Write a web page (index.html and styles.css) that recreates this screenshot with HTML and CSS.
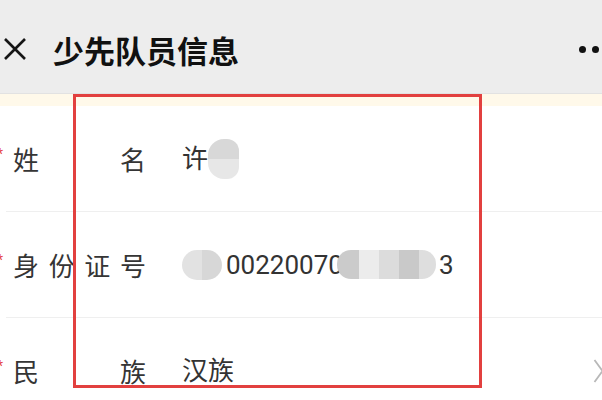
FILE: index.html
```html
<!DOCTYPE html>
<html lang="zh-CN">
<head>
<meta charset="utf-8">
<title>少先队员信息</title>
<link rel="stylesheet" href="styles.css">
</head>
<body>
<div class="page">
  <header class="header">
    <svg class="close" width="26" height="26" viewBox="0 0 26 26">
      <path d="M3 3 L23 23 M23 3 L3 23" stroke="#151515" stroke-width="2.6" fill="none"/>
    </svg>
    <h1 class="title">少先队员信息</h1>
    <div class="more"><span class="dot"></span><span class="dot"></span><span class="dot"></span></div>
  </header>
  <div class="notice"></div>
  <div class="list">
    <div class="row">
      <span class="req">*</span>
      <span class="label"><span>姓</span><span>名</span></span>
      <span class="value">许<span class="blob blob-name"></span></span>
    </div>
    <div class="row">
      <span class="req">*</span>
      <span class="label"><span>身</span><span>份</span><span>证</span><span>号</span></span>
      <span class="value"><span class="blob blob-id1"></span><span class="digits">00220070</span><span class="blob blob-id2"></span><span class="digits tail">3</span></span>
    </div>
    <div class="row">
      <span class="req">*</span>
      <span class="label"><span>民</span><span>族</span></span>
      <span class="value">汉族</span>
      <svg class="chevron" width="11" height="24" viewBox="0 0 11 24">
        <polyline points="1.5,1 9.5,12 1.5,23" fill="none" stroke="#b8b8b8" stroke-width="1.8"/>
      </svg>
    </div>
  </div>
  <div class="highlight"></div>
</div>
</body>
</html>
```
FILE: styles.css
```css
html, body {
  margin: 0;
  padding: 0;
  background: #ffffff;
}
.page {
  position: relative;
  width: 602px;
  height: 400px;
  overflow: hidden;
  font-family: Roboto, "Noto Sans CJK SC", sans-serif;
  color: #333333;
}
.header {
  box-sizing: border-box;
  height: 94px;
  padding: 5px 0 0 2px;
  background: #ededed;
  border-bottom: 1px solid #e2e2e2;
  display: flex;
  align-items: center;
}
.close {
  flex: none;
}
.title {
  margin: 0 0 0 25px;
  font-family: "Noto Sans CJK SC", sans-serif;
  font-size: 31px;
  font-weight: 700;
  line-height: 1;
  color: #111111;
}
.more {
  margin-left: auto;
  margin-right: -10px;
  display: flex;
  gap: 6px;
  align-items: center;
}
.dot {
  width: 7px;
  height: 7px;
  border-radius: 50%;
  background: #111111;
}
.notice {
  height: 12px;
  background: #fff9ea;
}
.list {
  margin-left: 6px;
}
.row {
  box-sizing: border-box;
  height: 106px;
  padding-left: 7px;
  border-bottom: 1px solid #efefef;
  display: flex;
  align-items: center;
  font-size: 26px;
  line-height: 1;
}
.req {
  width: 16px;
  margin-left: -16px;
  margin-top: -10px;
  font-size: 14px;
  color: #e64340;
  text-align: left;
}
.label {
  width: 133px;
  display: flex;
  justify-content: space-between;
  font-family: "Noto Sans CJK SC", sans-serif;
  color: #353535;
}
.value {
  margin-left: 36px;
  display: flex;
  align-items: center;
  font-family: Roboto, "Noto Sans CJK SC", sans-serif;
  color: #333333;
}
.blob {
  display: inline-block;
  flex: none;
}
.blob-name {
  width: 31px;
  height: 40px;
  margin-left: 0;
  border-radius: 16px 12px 12px 16px;
  background: linear-gradient(#d8d8d8 0, #d8d8d8 50%, #e7e7e7 50%, #e7e7e7 100%);
}
.blob-id1 {
  width: 40px;
  height: 30px;
  margin-right: 4px;
  border-radius: 15px;
  background: linear-gradient(90deg, #e2e2e2 0, #e2e2e2 50%, #d7d7d7 50%, #d7d7d7 100%);
}
.digits {
  font-family: Roboto, sans-serif;
}
.blob-id2 {
  width: 99px;
  height: 29px;
  margin-left: -6px;
  border-radius: 14px;
  background: linear-gradient(90deg,
    #cbcbcb 0, #cbcbcb 22px,
    #ececec 22px, #ececec 42px,
    #dcdcdc 42px, #dcdcdc 62px,
    #c9c9c9 62px, #c9c9c9 82px,
    #dedede 82px, #dedede 100%);
}
.tail {
  margin-left: 3px;
}
.chevron {
  margin-left: auto;
  margin-right: -2px;
  flex: none;
}
.highlight {
  position: absolute;
  left: 73px;
  top: 94px;
  width: 409px;
  height: 294px;
  box-sizing: border-box;
  border: 3px solid #e2403f;
  pointer-events: none;
}
```
